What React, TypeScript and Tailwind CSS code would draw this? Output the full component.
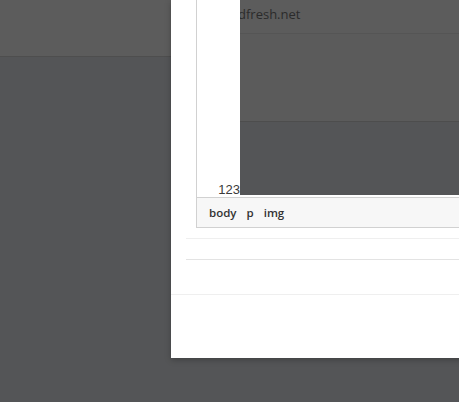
// screenshot of an image-insert dialog over a dimmed page
const crumbs = ["body", "p", "img"];

function PagePreview() {
  return (
    <div className="flex-1 overflow-hidden bg-[#545557] flex flex-col">
      <div className="h-[34px] shrink-0 bg-[#5c5c5c] border-b border-[#555555] flex items-start pt-[8px]">
        <span className="-ml-[2px] font-['Open_Sans',sans-serif] text-[13px] leading-[13px] text-[#2b2b2b] whitespace-nowrap">
          dfresh.net
        </span>
      </div>
      <div className="h-[88px] shrink-0 bg-[#5b5b5b] border-b border-[#4d4d4d]" />
      <div className="flex-1" />
    </div>
  );
}

function Editor() {
  return (
    <div className="ml-[10px] border-l border-[#d1d1d1] flex flex-col">
      <div className="h-[195px] flex">
        <div className="w-[43px] bg-white flex items-end justify-end">
          <span className="font-['Liberation_Sans',Arial,sans-serif] text-[13px] leading-[13px] -mb-px text-[#3a3a3a]">
            123
          </span>
        </div>
        <PagePreview />
      </div>
      <div className="h-[2px] bg-white" />
      <div className="h-[31px] bg-[#f7f7f7] border-y border-[#d1d1d1] flex items-center pl-[12px] gap-[10px] font-['Open_Sans',sans-serif] text-[11.5px] font-semibold text-[#333]">
        {crumbs.map((c) => (
          <span key={c}>{c}</span>
        ))}
      </div>
    </div>
  );
}

export default function App() {
  return (
    <div className="relative w-[459px] h-[402px] overflow-hidden bg-[#545557]">
      <div className="h-[57px] bg-[#5c5c5c] border-b border-[#4e4e4e]" />

      <div className="absolute left-[171px] top-0 w-[320px] h-[358px] bg-white shadow-[0_2px_6px_rgba(0,0,0,0.25)] flex flex-col">
        <div className="pl-[15px]">
          <Editor />
          <div className="mt-[10px] h-px bg-[#efefef]" />
          <div className="mt-[20px] h-px bg-[#e3e3e3]" />
        </div>
        <div className="mt-[34px] h-px bg-[#efefef]" />
        <div className="flex-1" />
      </div>
    </div>
  );
}
